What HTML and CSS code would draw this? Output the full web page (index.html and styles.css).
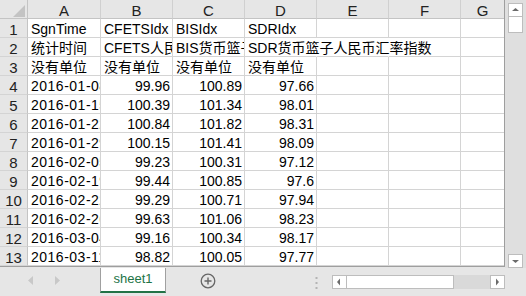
FILE: index.html
```html
<!DOCTYPE html>
<html lang="zh">
<head>
    <meta charset="UTF-8">
    <title>sheet1</title>
    <link rel="stylesheet" href="styles.css">
</head>
<body>
<div class="app">
    <div class="main">
        <div class="sheet">
            <div class="corner"><svg width="12" height="12"><polygon points="12,0 12,12 0,12" fill="#c3c3c3"/></svg></div>
            <div class="ch">A</div><div class="ch">B</div><div class="ch">C</div><div class="ch">D</div><div class="ch">E</div><div class="ch">F</div><div class="ch last">G</div>

            <div class="rh">1</div><div>SgnTime</div><div>CFETSIdx</div><div>BISIdx</div><div>SDRIdx</div><div></div><div></div><div></div>
            <div class="rh">2</div><div>统计时间</div><div>CFETS人民币汇率指数</div><div>BIS货币篮子人民币汇率指数</div><div class="spill">SDR货币篮子人民币汇率指数</div><div class="spill"></div><div></div><div></div>
            <div class="rh">3</div><div>没有单位</div><div>没有单位</div><div>没有单位</div><div>没有单位</div><div></div><div></div><div></div>
            <div class="rh">4</div><div class="date">2016-01-08</div><div class="num">99.96</div><div class="num">100.89</div><div class="num">97.66</div><div></div><div></div><div></div>
            <div class="rh">5</div><div class="date">2016-01-15</div><div class="num">100.39</div><div class="num">101.34</div><div class="num">98.01</div><div></div><div></div><div></div>
            <div class="rh">6</div><div class="date">2016-01-22</div><div class="num">100.84</div><div class="num">101.82</div><div class="num">98.31</div><div></div><div></div><div></div>
            <div class="rh">7</div><div class="date">2016-01-29</div><div class="num">100.15</div><div class="num">101.41</div><div class="num">98.09</div><div></div><div></div><div></div>
            <div class="rh">8</div><div class="date">2016-02-05</div><div class="num">99.23</div><div class="num">100.31</div><div class="num">97.12</div><div></div><div></div><div></div>
            <div class="rh">9</div><div class="date">2016-02-19</div><div class="num">99.44</div><div class="num">100.85</div><div class="num">97.6</div><div></div><div></div><div></div>
            <div class="rh">10</div><div class="date">2016-02-22</div><div class="num">99.29</div><div class="num">100.71</div><div class="num">97.94</div><div></div><div></div><div></div>
            <div class="rh">11</div><div class="date">2016-02-26</div><div class="num">99.63</div><div class="num">101.06</div><div class="num">98.23</div><div></div><div></div><div></div>
            <div class="rh">12</div><div class="date">2016-03-04</div><div class="num">99.16</div><div class="num">100.34</div><div class="num">98.17</div><div></div><div></div><div></div>
            <div class="rh">13</div><div class="date">2016-03-11</div><div class="num">98.82</div><div class="num">100.05</div><div class="num">97.77</div><div></div><div></div><div></div>
        </div>
        <div class="vscroll">
            <div class="btn"><svg width="13" height="12"><polygon points="3,7 10,7 6.5,4" fill="#6b6b6b"/></svg></div>
            <div class="vthumb"></div>
            <div class="track"></div>
            <div class="btn"><svg width="13" height="12"><polygon points="3,5 10,5 6.5,8" fill="#6b6b6b"/></svg></div>
        </div>
    </div>
    <div class="tabs">
        <div class="nav">
            <svg width="5" height="9"><polygon points="5,0 5,9 0,4.5" fill="#c8c8c8"/></svg>
            <svg width="5" height="9"><polygon points="0,0 0,9 5,4.5" fill="#c8c8c8"/></svg>
        </div>
        <div class="tab">sheet1</div>
        <svg class="add" width="16" height="16">
            <circle cx="8" cy="8" r="6.8" fill="none" stroke="#666" stroke-width="1.3"/>
            <path d="M8 4.5v7M4.5 8h7" stroke="#666" stroke-width="1.4"/>
        </svg>
        <svg class="dots" width="3" height="12">
            <rect x="0.5" y="0" width="2" height="2" fill="#b4b4b4"/>
            <rect x="0.5" y="5" width="2" height="2" fill="#b4b4b4"/>
            <rect x="0.5" y="10" width="2" height="2" fill="#b4b4b4"/>
        </svg>
        <div class="hscroll">
            <div class="hbtn"><svg width="13" height="12"><polygon points="7,2.5 7,9.5 4,6" fill="#6b6b6b"/></svg></div>
            <div class="hthumb"></div>
            <div class="htrack"></div>
            <div class="hbtn"><svg width="13" height="12"><polygon points="5,2.5 5,9.5 8,6" fill="#6b6b6b"/></svg></div>
        </div>
    </div>
</div>
</body>
</html>
```

FILE: styles.css
```css
body {
    margin: 0;
    font-family: "Liberation Sans", "Noto Sans CJK SC", sans-serif;
}

.app {
    width: 526px;
    height: 296px;
    background-color: #e6e6e6;
}

.main {
    display: flex;
    height: 268px;
}

.sheet {
    width: 504px;
    height: 266px;
    border-right: 1px solid #9e9e9e;
    border-bottom: 1px solid #9e9e9e;
    background-color: #fff;
    display: grid;
    grid-template-columns: 28px 73px repeat(5, 72px) 43px;
    grid-auto-rows: 19px;
    overflow: hidden;
}

.sheet > div {
    box-sizing: border-box;
    border-right: 1px solid #d4d4d4;
    border-bottom: 1px solid #d4d4d4;
    overflow: hidden;
    white-space: nowrap;
    font-size: 14px;
    line-height: 15px;
    padding: 3px 3px 0;
    color: #000;
}

.sheet > div:nth-child(8n) {
    border-right: none;
}

.sheet > .num {
    text-align: right;
    padding-right: 2px;
}

.sheet > .date {
    letter-spacing: 0.5px;
}

.sheet > .spill {
    overflow: visible;
    border-right-color: transparent;
}

.sheet > .corner {
    padding: 5px 0 0 13px;
    background-color: #e6e6e6;
    border-right-color: #c4c4c4;
    border-bottom-color: #c4c4c4;
}

.corner svg {
    display: block;
}

.sheet > .ch {
    background-color: #e6e6e6;
    border-right-color: #d0d0d0;
    border-bottom-color: #c4c4c4;
    text-align: center;
    font-size: 15px;
    color: #222;
}

.sheet > .rh {
    background-color: #e6e6e6;
    border-right-color: #c4c4c4;
    border-bottom-color: #d4d4d4;
    text-align: center;
    font-size: 15px;
    padding: 3px 0 0;
    color: #222;
}

.vscroll {
    width: 21px;
    box-sizing: border-box;
    padding: 3px 3px 0;
    background-color: #dfdfdf;
    display: flex;
    flex-direction: column;
}

.btn, .vthumb, .hbtn, .hthumb {
    box-sizing: border-box;
    background-color: #fff;
    border: 1px solid #bdbdbd;
}

.btn {
    height: 14px;
}

.btn svg, .hbtn svg {
    display: block;
}

.vthumb {
    height: 16px;
    border-top: none;
}

.track {
    flex: 1;
}

.tabs {
    display: flex;
    align-items: flex-start;
    height: 28px;
}

.nav {
    width: 100px;
    height: 25px;
    box-sizing: border-box;
    padding-left: 28px;
    display: flex;
    align-items: center;
    gap: 22px;
}

.tab {
    width: 66px;
    height: 25px;
    box-sizing: border-box;
    background-color: #fff;
    border-left: 1px solid #a0a0a0;
    border-right: 1px solid #a0a0a0;
    border-bottom: 2px solid #217346;
    text-align: center;
    font-size: 13px;
    line-height: 22px;
    color: #217346;
}

.add {
    margin: 5px 0 0 34px;
}

.dots {
    margin: 9px 0 0 99px;
}

.hscroll {
    width: 173px;
    height: 14px;
    margin: 7px 0 0 14px;
    display: flex;
}

.hbtn {
    width: 15px;
}

.hthumb {
    width: 107px;
    border-left: none;
}

.htrack {
    flex: 1;
    background-color: #d9d9d9;
}
```
